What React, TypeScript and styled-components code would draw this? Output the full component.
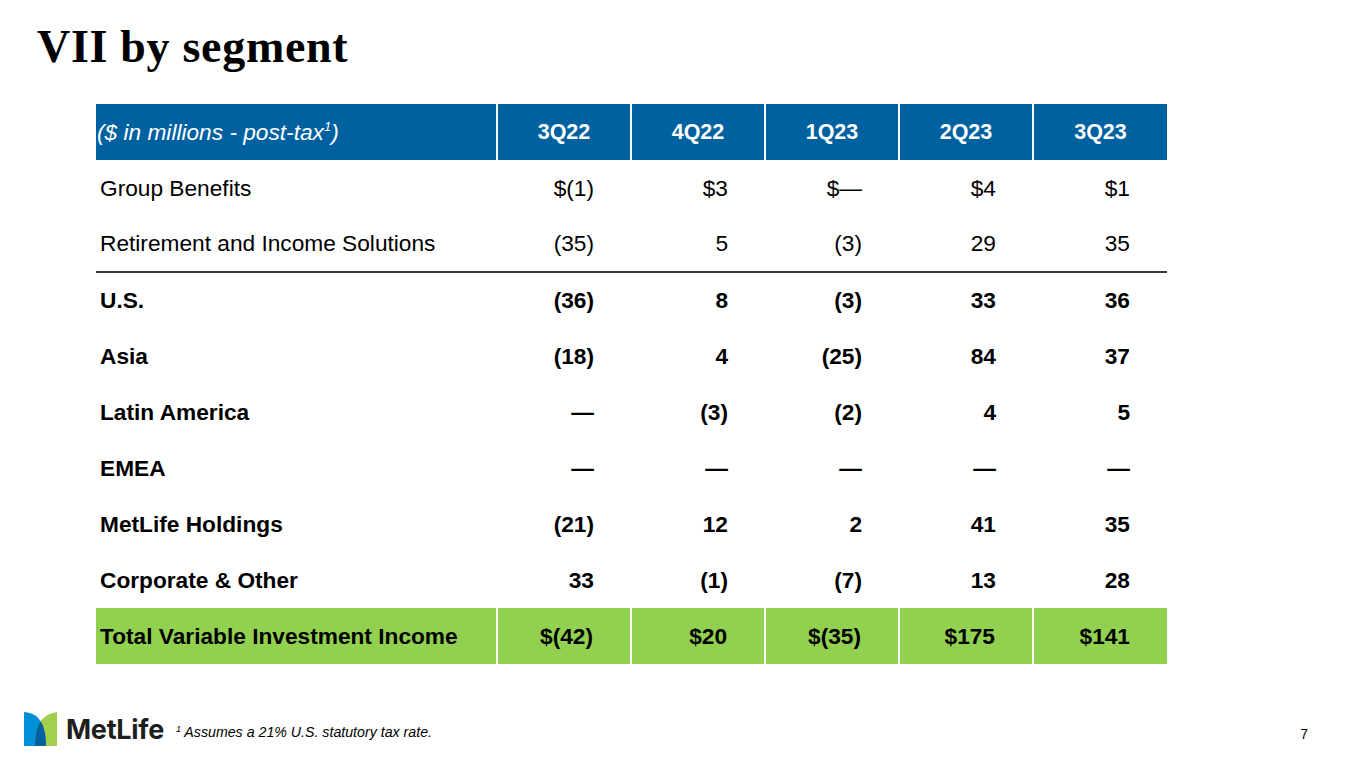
import styled, { createGlobalStyle } from "styled-components"

const GlobalStyle = createGlobalStyle`
  html, body {
    margin: 0;
    padding: 0;
    background: #ffffff;
  }
  body {
    font-family: "Liberation Sans", Arial, sans-serif;
    color: #000;
  }
`

type Row = {
  label: string
  values: string[]
  bold?: boolean
  rule?: boolean
}

const quarters = ["3Q22", "4Q22", "1Q23", "2Q23", "3Q23"]

const rows: Row[] = [
  { label: "Group Benefits", values: ["$(1)", "$3", "$\u2014", "$4", "$1"] },
  { label: "Retirement and Income Solutions", values: ["(35)", "5", "(3)", "29", "35"], rule: true },
  { label: "U.S.", values: ["(36)", "8", "(3)", "33", "36"], bold: true },
  { label: "Asia", values: ["(18)", "4", "(25)", "84", "37"], bold: true },
  { label: "Latin America", values: ["\u2014", "(3)", "(2)", "4", "5"], bold: true },
  { label: "EMEA", values: ["\u2014", "\u2014", "\u2014", "\u2014", "\u2014"], bold: true },
  { label: "MetLife Holdings", values: ["(21)", "12", "2", "41", "35"], bold: true },
  { label: "Corporate & Other", values: ["33", "(1)", "(7)", "13", "28"], bold: true },
]

const total = { label: "Total Variable Investment Income", values: ["$(42)", "$20", "$(35)", "$175", "$141"] }

const App = () => {
  return (
    <Page>
      <GlobalStyle />
      <Title>VII by segment</Title>

      <TableWrap>
        <Table>
          <colgroup>
            <col style={{ width: 401 }} />
            {quarters.map(q => <col key={q} style={{ width: 134 }} />)}
          </colgroup>
          <thead>
            <tr>
              <HeadLabel>($ in millions - post-tax<sup>1</sup>)</HeadLabel>
              {quarters.map(q => <HeadCell key={q}>{q}</HeadCell>)}
            </tr>
          </thead>
          <tbody>
            {rows.map(r => (
              <BodyRow key={r.label} $bold={r.bold} $rule={r.rule}>
                <LabelCell>{r.label}</LabelCell>
                {r.values.map((v, i) => <NumCell key={i}>{v}</NumCell>)}
              </BodyRow>
            ))}
            <TotalRow>
              <LabelCell>{total.label}</LabelCell>
              {total.values.map((v, i) => <NumCell key={i}>{v}</NumCell>)}
            </TotalRow>
          </tbody>
        </Table>
      </TableWrap>

      <Footer>
        <Logo>
          <svg width="33" height="34" viewBox="0 0 33 34">
            <defs>
              <clipPath id="blueClip">
                <path d="M0 0 C 12 1, 22 8, 22 34 L 0 34 Z" />
              </clipPath>
            </defs>
            <path d="M0 0 C 12 1, 22 8, 22 34 L 0 34 Z" fill="#0090da" />
            <path d="M33 0 L 33 34 L 11 34 C 11 14, 16 3, 33 0 Z" fill="#a4ce4e" />
            <path d="M33 0 L 33 34 L 11 34 C 11 14, 16 3, 33 0 Z" fill="#0061a0" clipPath="url(#blueClip)" />
          </svg>
          <LogoText>MetLife</LogoText>
        </Logo>
        <Footnote><sup>1</sup> Assumes a 21% U.S. statutory tax rate.</Footnote>
        <PageNum>7</PageNum>
      </Footer>
    </Page>
  )
}

export default App

const Page = styled.div`
  width: 1365px;
  height: 769px;
  box-sizing: border-box;
  display: flex;
  flex-direction: column;
  padding: 22px 0 0 0;
  overflow: hidden;
`

const Title = styled.h1`
  margin: 0 0 0 37px;
  font-family: "Liberation Serif", "Times New Roman", serif;
  font-weight: 700;
  font-size: 46px;
  line-height: 50px;
  letter-spacing: 0.7px;
  color: #000;
`

const TableWrap = styled.div`
  padding: 32px 0 0 96px;
`

const Table = styled.table`
  table-layout: fixed;
  width: 1071px;
  border-collapse: collapse;
  font-size: 22.7px;
`

const HeadLabel = styled.th`
  height: 56px;
  padding: 0 0 0 1px;
  background: #0061a0;
  color: #fff;
  font-style: italic;
  font-weight: 400;
  text-align: left;
  white-space: nowrap;
  sup {
    font-size: 13px;
    vertical-align: 9px;
    line-height: 0;
  }
`

const HeadCell = styled.th`
  height: 56px;
  padding: 0;
  background: #0061a0;
  color: #fff;
  font-size: 21.5px;
  font-weight: 700;
  text-align: center;
  border-left: 2px solid #fff;
`

const BodyRow = styled.tr<{ $bold?: boolean; $rule?: boolean }>`
  height: 56px;
  font-weight: ${p => (p.$bold ? 700 : 400)};
  border-bottom: ${p => (p.$rule ? "2px solid #3a3a3a" : "none")};
`

const TotalRow = styled.tr`
  height: 56px;
  font-weight: 700;
  background: #92d050;
  td + td {
    border-left: 2px solid #fff;
  }
`

const LabelCell = styled.td`
  padding: 0 0 0 4px;
  text-align: left;
  white-space: nowrap;
`

const NumCell = styled.td`
  padding: 0 37px 0 0;
  text-align: right;
`

const Footer = styled.div`
  margin-top: auto;
  height: 60px;
  display: flex;
  align-items: center;
  padding: 0 0 20px 24px;
  box-sizing: border-box;
`

const Logo = styled.div`
  display: flex;
  align-items: center;
  gap: 9px;
`

const LogoText = styled.span`
  font-family: Inter, "Noto Sans", sans-serif;
  font-weight: 700;
  font-size: 27px;
  color: #1e1e1e;
  letter-spacing: -0.3px;
`

const Footnote = styled.span`
  margin-left: 12px;
  margin-top: 5px;
  font-style: italic;
  font-size: 14.2px;
  color: #000;
  sup {
    font-size: 9px;
    vertical-align: 5px;
    line-height: 0;
  }
`

const PageNum = styled.span`
  margin-left: auto;
  margin-right: 57px;
  margin-top: 10px;
  font-size: 14px;
`
